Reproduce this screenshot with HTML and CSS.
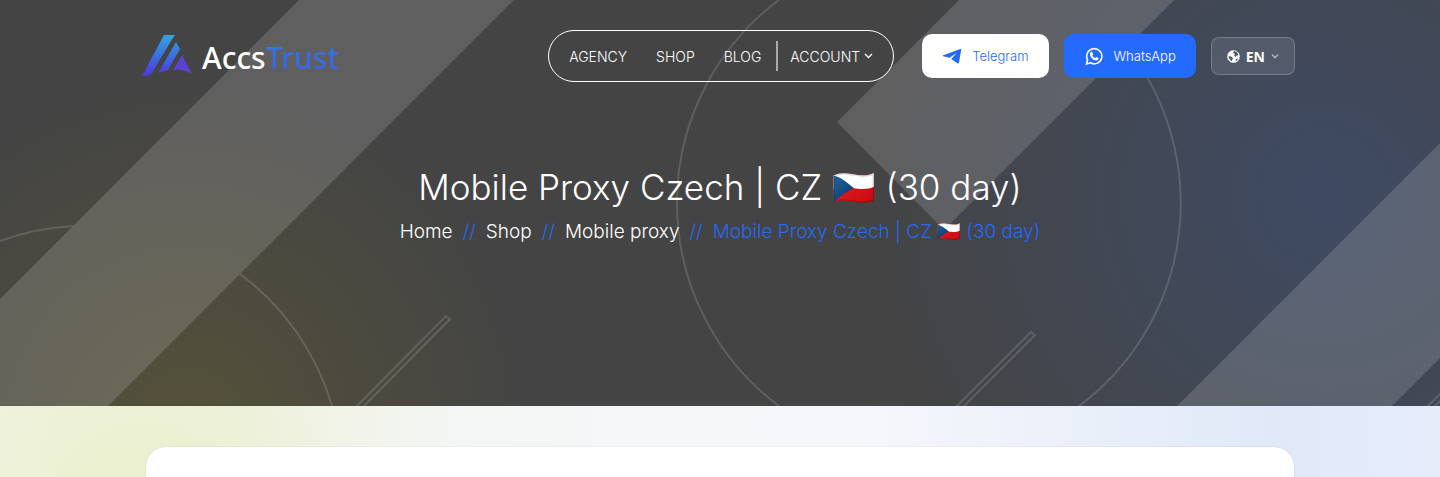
FILE: index.html
```html
<!DOCTYPE html>
<html lang="en">
<head>
    <meta charset="UTF-8">
    <meta name="viewport" content="width=device-width, initial-scale=1.0">
    <title>Mobile Proxy Czech | CZ 🇨🇿 (30 day)</title>
    <link rel="stylesheet" href="styles.css">
</head>
<body>
    <div class="hero">
        <svg class="hero-pattern" viewBox="0 0 1440 406" preserveAspectRatio="xMidYMid slice" aria-hidden="true">
            <g fill="#fff" fill-opacity="0.15">
                <path d="M299 0H514L108 406H0V299z"/>
                <path d="M959 0H1174L944 230L837 122z"/>
                <path d="M1440 143V358L1392 406H1177z"/>
            </g>
            <g fill="none" stroke="#fff" stroke-opacity="0.14" stroke-width="2">
                <path d="M0 241A253 253 0 0 1 73 226"/>
                <path d="M240 274A253 253 0 0 1 332 406"/>
                <path d="M779 0A253 253 0 0 0 779 406"/>
                <path d="M1126 46A253 253 0 0 1 1079 406"/>
                <path d="M356 407L446 316L450 319L363 407"/>
                <path d="M956 407L1031 332L1035 335L963 407"/>
                <path d="M1427 407L1441 393M1434 407L1441 400"/>
            </g>
        </svg>

        <header class="header container">
            <a class="logo" href="#">
                <svg class="logo-mark" width="50" height="44" viewBox="0 0 50 44" aria-hidden="true">
                    <defs>
                        <linearGradient id="logoFill" gradientUnits="userSpaceOnUse" x1="0" y1="0" x2="0" y2="42">
                            <stop offset="0" stop-color="#35a5da"/>
                            <stop offset="0.5" stop-color="#3b72e2"/>
                            <stop offset="1" stop-color="#5034da"/>
                        </linearGradient>
                    </defs>
                    <path fill="url(#logoFill)" d="M22 1H33L29 7L10 39Q8 42 5 42H0z"/>
                    <path fill="url(#logoFill)" d="M34 8L38 15L27 34Q26 37 23 37L16 39z"/>
                    <path fill="#5c43cf" d="M40 21L50 40Q41 35 31 36z"/>
                </svg>
                <span class="logo-text">Accs<span class="logo-accent">Trust</span></span>
            </a>

            <nav class="nav">
                <a href="#">AGENCY</a>
                <a href="#">SHOP</a>
                <a href="#">BLOG</a>
                <a class="nav-account" href="#">ACCOUNT
                    <svg width="9" height="6" viewBox="0 0 9 6" aria-hidden="true"><path d="M1 1L4.500 4.500L8 1" fill="none" stroke="currentColor" stroke-width="1.300"/></svg>
                </a>
            </nav>

            <div class="actions">
                <a class="btn btn-light" href="#">
                    <svg width="20" height="18" viewBox="0 0 20 18" aria-hidden="true"><path fill="currentColor" d="M18.300 2Q19.400 1.600 19.200 2.800L17 15.500Q16.700 17 15.300 16.200L9.300 12L14.700 6L7.500 10.700L1.200 9.200Q.2 8.700 1.300 8.300z"/></svg>
                    Telegram
                </a>
                <a class="btn btn-blue" href="#">
                    <svg width="20" height="18" viewBox="0 0 20 18" aria-hidden="true">
                        <path d="M2.500 17L3.600 12.800A7.600 7.600 0 1 1 6.500 15.800z" fill="none" stroke="currentColor" stroke-width="1.600"/>
                        <path fill="currentColor" d="M7.300 4.800H8.100L9.200 7.200L8.300 8.500Q9.300 10.300 11.200 11.100L12.300 9.900L14.600 11Q14.700 13.400 12.200 13.500Q7.300 12.900 6 8Q5.700 5.800 7.300 4.800z"/>
                    </svg>
                    WhatsApp
                </a>
                <button class="lang" type="button">
                    <svg width="13" height="13" viewBox="0 0 13 13" aria-hidden="true">
                        <circle cx="6.500" cy="6.500" r="6.300" fill="#fff"/>
                        <path fill="#525866" d="M1.500 6L4 6.500L6 8L5.500 9.500L4.500 11.500L3 9.500L2 8zM7 1L10 2L11.500 5L10 5.500L8.500 7L7 5.500L8 4L6 3zM9 9L11 8.500L10 10.500L8.500 11z"/>
                    </svg>
                    EN
                    <svg width="8" height="5" viewBox="0 0 8 5" aria-hidden="true"><path d="M1 .7L4 3.700L7 .7" fill="none" stroke="#c5c8ce" stroke-width="1.200"/></svg>
                </button>
            </div>
        </header>

        <div class="page-title">
            <h1>Mobile Proxy Czech | CZ 🇨🇿 (30 day)</h1>
            <ul class="breadcrumb">
                <li><a href="#">Home</a></li>
                <li><a href="#">Shop</a></li>
                <li><a href="#">Mobile proxy</a></li>
                <li class="current">Mobile Proxy Czech | CZ 🇨🇿 (30 day)</li>
            </ul>
        </div>
    </div>

    <main class="content">
        <div class="card container"></div>
    </main>
</body>
</html>
```
FILE: styles.css
```css
* {
    box-sizing: border-box;
}

body {
    margin: 0;
    min-height: 100vh;
    display: flex;
    flex-direction: column;
    font-family: Inter, "Noto Color Emoji", sans-serif;
    color: #fff;
}

a {
    color: inherit;
    text-decoration: none;
}

.container {
    width: 100%;
    max-width: 1150px;
    margin: 0 auto;
}

/* Hero */
.hero {
    position: relative;
    padding: 30px 0 160px;
    background:
        radial-gradient(circle at 13% 105%, rgba(86, 82, 56, 0.9), rgba(86, 82, 56, 0) 340px),
        radial-gradient(circle at 92% 48%, rgba(62, 75, 102, 0.9), rgba(62, 75, 102, 0) 460px),
        #444;
}

.hero-pattern {
    position: absolute;
    top: 0;
    left: 0;
    width: 100%;
    height: 100%;
}

.header {
    position: relative;
    display: flex;
    align-items: center;
}

.logo {
    display: flex;
    align-items: center;
    gap: 10px;
    margin-left: -3px;
    margin-right: auto;
}

.logo-text {
    padding-top: 4px;
    font-family: "Noto Sans", sans-serif;
    font-size: 30px;
    font-weight: 500;
    line-height: 36px;
}

.logo-accent {
    background: linear-gradient(#3478e0, #3a61e6);
    -webkit-background-clip: text;
    background-clip: text;
    color: transparent;
}

.nav {
    display: flex;
    align-items: center;
    gap: 29px;
    height: 52px;
    padding: 0 20px;
    border: 1px solid #fff;
    border-radius: 26px;
    font-size: 14px;
    font-weight: 300;
}

.nav-account {
    display: flex;
    align-items: center;
    gap: 4px;
    height: 30px;
    margin-left: -14px;
    padding-left: 12px;
    border-left: 2px solid #aaa;
}

.actions {
    display: flex;
    align-items: center;
    gap: 15px;
    margin-left: 28px;
}

.btn {
    display: flex;
    align-items: center;
    gap: 10px;
    height: 44px;
    padding: 0 20px;
    border-radius: 10px;
    font-size: 13px;
    font-weight: 350;
}

.btn-light {
    background-color: #fff;
    color: #256af4;
}

.btn-blue {
    background-color: #256aff;
}

.lang {
    display: flex;
    align-items: center;
    gap: 6px;
    height: 38px;
    padding: 0 15px;
    border: 1px solid rgba(255, 255, 255, 0.2);
    border-radius: 8px;
    background-color: rgba(255, 255, 255, 0.1);
    color: #fff;
    font-family: "Open Sans", sans-serif;
    font-size: 14px;
    font-weight: 700;
    cursor: pointer;
}

/* Title and breadcrumb */
.page-title {
    position: relative;
    margin-top: 82px;
    text-align: center;
}

h1 {
    margin: 0;
    font-size: 35px;
    font-weight: 350;
    line-height: 46px;
}

.breadcrumb {
    display: flex;
    justify-content: center;
    margin: 8px 0 0;
    padding: 0;
    list-style: none;
    font-size: 19px;
    font-weight: 300;
    line-height: 28px;
}

.breadcrumb li + li::before {
    content: "//";
    margin: 0 10px;
    color: #256af4;
}

.breadcrumb .current {
    color: #256af4;
}

/* Content */
.content {
    flex: 1;
    display: flex;
    padding-top: 41px;
    background:
        radial-gradient(circle at 8% 140%, rgba(233, 239, 202, 0.8), rgba(233, 239, 202, 0) 240px),
        linear-gradient(90deg, #f2f4e4 0%, #eef1dc 15%, #f4f6f5 32%, #f5f7fb 60%, #e1e9f8 88%, #e6ecfa 100%);
}

.card {
    max-width: 1148px;
    background-color: #fff;
    border-radius: 20px 20px 0 0;
    box-shadow: 0 0 2px rgba(0, 0, 0, 0.12);
}
```
